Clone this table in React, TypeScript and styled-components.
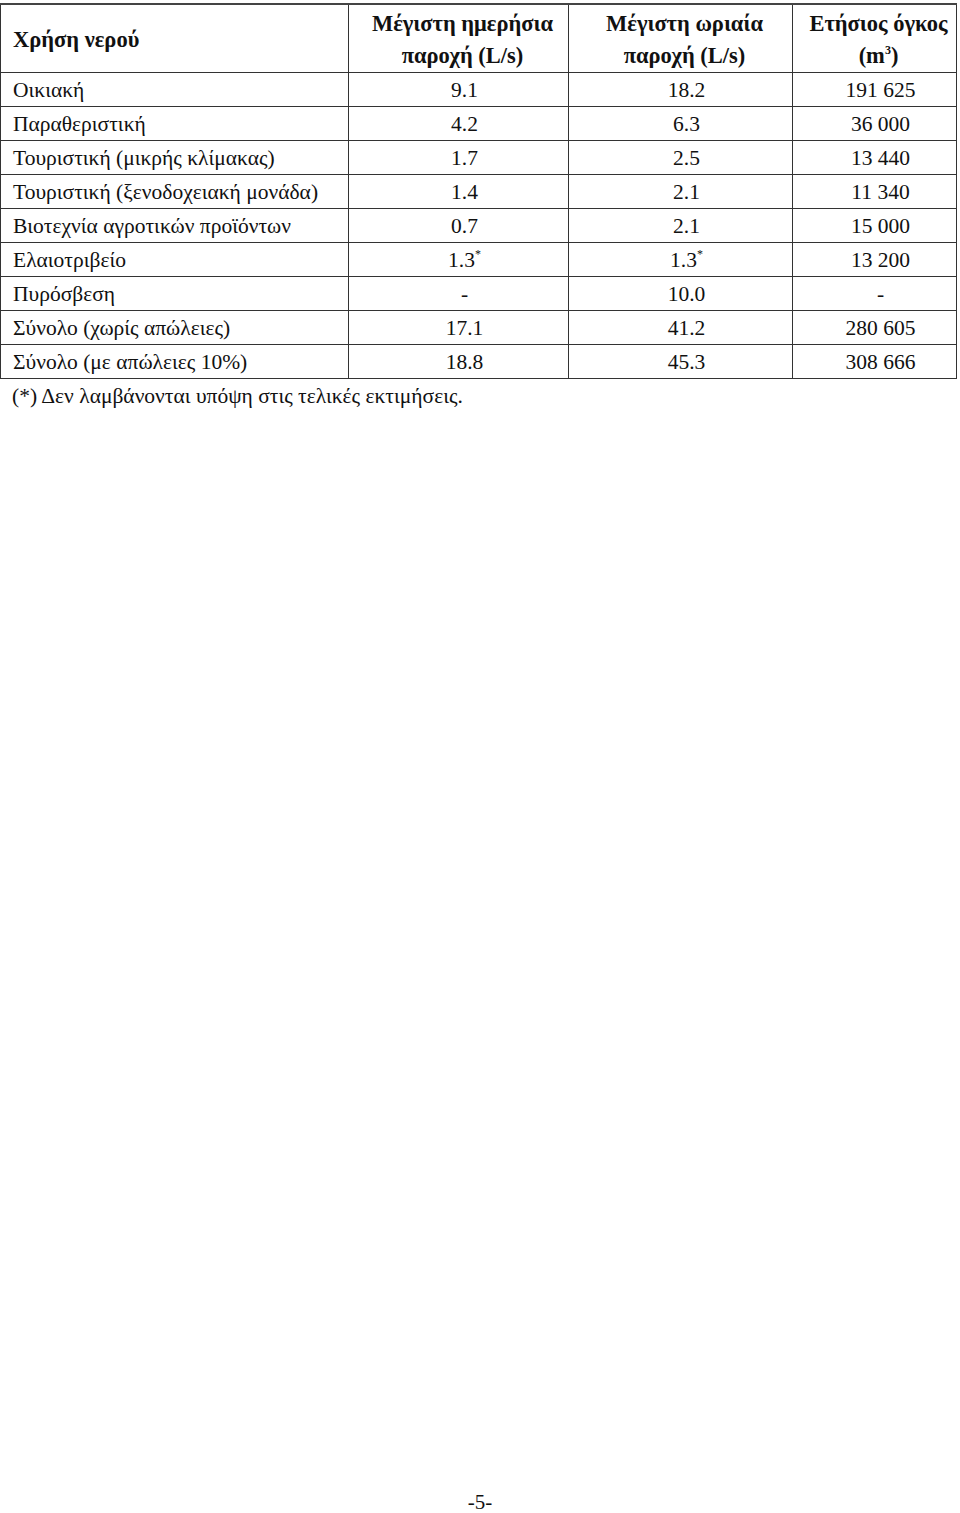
import React from "react";
import styled, { createGlobalStyle } from "styled-components";

const Global = createGlobalStyle`
  html, body { margin: 0; padding: 0; background: #fff; }
  body { font-family: "Liberation Serif", "Times New Roman", serif; color: #111; }
`;

const Page = styled.div`
  width: 960px;
  height: 1513px;
  display: flex;
  flex-direction: column;
  box-sizing: border-box;
  padding-top: 3px;
`;

const Table = styled.table`
  border-collapse: collapse;
  width: 956px;
  table-layout: fixed;
  font-size: 21.5px;
  margin-left: 0;
  border-top: 2px solid #444;
`;

const Th = styled.th<{ $align?: string; $valign?: string }>`
  border: 1px solid #333;
  font-weight: bold;
  font-size: 22.5px;
  text-align: ${(p) => p.$align || "center"};
  padding: 3px 4px 0 12px;
  height: 67px;
  line-height: 32px;
  vertical-align: ${(p) => p.$valign || "top"};
  white-space: nowrap;
  box-sizing: border-box;
`;

const Td = styled.td<{ $align?: string }>`
  border: 1px solid #333;
  text-align: ${(p) => p.$align || "center"};
  padding: 2px 0 0 12px;
  height: 34px;
  line-height: 31px;
  vertical-align: middle;
  white-space: nowrap;
  box-sizing: border-box;
`;

const Sup = styled.sup`
  font-size: 12px;
  line-height: 0;
  vertical-align: 9px;
`;

const Note = styled.div`
  font-size: 21.5px;
  padding: 5px 0 0 12px;
  line-height: 24px;
`;

const PageNum = styled.div`
  margin-top: auto;
  text-align: center;
  font-size: 21px;
  height: 22px;
  line-height: 22px;
`;

type Row = { name: string; d: string; h: string; y: string; ds?: boolean; hs?: boolean };

const rows: Row[] = [
  { name: "Οικιακή", d: "9.1", h: "18.2", y: "191 625" },
  { name: "Παραθεριστική", d: "4.2", h: "6.3", y: "36 000" },
  { name: "Τουριστική (μικρής κλίμακας)", d: "1.7", h: "2.5", y: "13 440" },
  { name: "Τουριστική (ξενοδοχειακή μονάδα)", d: "1.4", h: "2.1", y: "11 340" },
  { name: "Βιοτεχνία αγροτικών προϊόντων", d: "0.7", h: "2.1", y: "15 000" },
  { name: "Ελαιοτριβείο", d: "1.3", h: "1.3", y: "13 200", ds: true, hs: true },
  { name: "Πυρόσβεση", d: "-", h: "10.0", y: "-" },
  { name: "Σύνολο (χωρίς απώλειες)", d: "17.1", h: "41.2", y: "280 605" },
  { name: "Σύνολο (με απώλειες 10%)", d: "18.8", h: "45.3", y: "308 666" },
];

export default function App() {
  return (
    <>
      <Global />
      <Page>
        <Table>
          <colgroup>
            <col style={{ width: 348 }} />
            <col style={{ width: 220 }} />
            <col style={{ width: 224 }} />
            <col style={{ width: 164 }} />
          </colgroup>
          <thead>
            <tr>
              <Th $align="left" $valign="middle">Χρήση νερού</Th>
              <Th>
                Μέγιστη ημερήσια
                <br />
                παροχή (L/s)
              </Th>
              <Th>
                Μέγιστη ωριαία
                <br />
                παροχή (L/s)
              </Th>
              <Th>
                Ετήσιος όγκος
                <br />
                (m<Sup>3</Sup>)
              </Th>
            </tr>
          </thead>
          <tbody>
            {rows.map((r) => (
              <tr key={r.name}>
                <Td $align="left">{r.name}</Td>
                <Td>
                  {r.d}
                  {r.ds && <Sup>*</Sup>}
                </Td>
                <Td>
                  {r.h}
                  {r.hs && <Sup>*</Sup>}
                </Td>
                <Td>{r.y}</Td>
              </tr>
            ))}
          </tbody>
        </Table>
        <Note>(*) Δεν λαμβάνονται υπόψη στις τελικές εκτιμήσεις.</Note>
        <PageNum>-5-</PageNum>
      </Page>
    </>
  );
}
